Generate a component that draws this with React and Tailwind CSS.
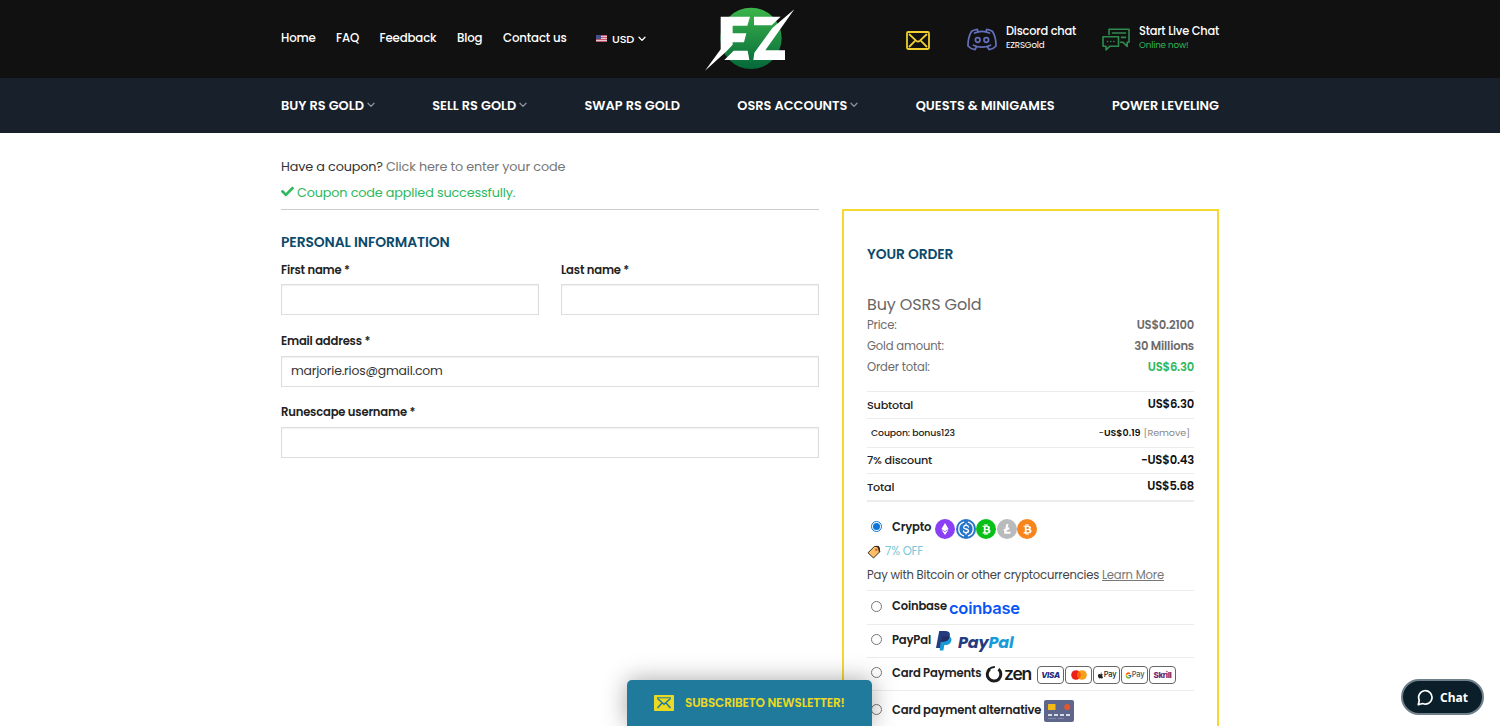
import { FaApple, FaBtc, FaCheck, FaEthereum } from "react-icons/fa";
import { FcGoogle } from "react-icons/fc";

function Caret({ className }) {
  return (
    <svg viewBox="0 0 8 6" className={className} fill="none" stroke="currentColor" strokeWidth="1.3" strokeLinecap="round" strokeLinejoin="round">
      <path d="M1 1.2 4 4.4 7 1.2" />
    </svg>
  );
}

function Logo() {
  return (
    <svg viewBox="0 0 360 234" className="h-[78px] w-[120px]">
      <defs>
        <linearGradient id="ball" x1="0" y1="0" x2="0" y2="1">
          <stop offset="0" stopColor="#3bb54a" />
          <stop offset="1" stopColor="#05683a" />
        </linearGradient>
      </defs>
      <circle cx="183" cy="115" r="92" fill="url(#ball)" />
      <g fill="#fff">
        <path d="M92 50H180L172 77H128V100H169L162 127H128V134L108 155L45 212L92 148Z" />
        <path d="M103 180 131 152H173L178 180Z" />
        <path d="M192 50H272L245 76H192Z" />
        <path d="M313 28 226 151H285V180H190L193 158L247 84Z" />
      </g>
    </svg>
  );
}

function Envelope({ className }) {
  return (
    <svg viewBox="0 0 24 19" className={className} fill="none" stroke="currentColor" strokeWidth="1.8" strokeLinejoin="round" strokeLinecap="round">
      <rect x="1" y="1" width="22" height="17" rx="1.2" />
      <path d="M3.500 3.500 10.300 9.800Q12 11.300 13.700 9.800L20.500 3.500M3.500 15.500 8.800 10.200M20.500 15.500 15.200 10.200" />
    </svg>
  );
}

function Discord() {
  return (
    <svg viewBox="0 0 30 23" className="h-[23px] w-[30px]" fill="none" stroke="#6470bd" strokeWidth="1.7" strokeLinecap="round" strokeLinejoin="round">
      <path d="M11 3.400 10.300 1.300Q7.500 1.500 4.600 3.300Q.8 9.500 1 18Q3.500 21 8 21.700L9.600 18.700M19 3.400 19.700 1.300Q22.500 1.500 25.400 3.300Q29.200 9.500 29 18Q26.500 21 22 21.700L20.400 18.700" />
      <path d="M7.500 5Q15 1.800 22.500 5M6.500 17.200Q15 21.200 23.500 17.200" />
      <circle cx="10.700" cy="12" r="2.300" />
      <circle cx="19.300" cy="12" r="2.300" />
    </svg>
  );
}

function LiveChat() {
  return (
    <svg viewBox="0 0 28 23" className="h-[23px] w-[28px]" fill="none" stroke="#2f8a50" strokeWidth="1.6" strokeLinejoin="round" strokeLinecap="round">
      <path d="M7 6.500V1.200H27V14.200H25.200V18.400L20.800 14.200H18.500" />
      <path d="M1 8.700H16.500V18.200H8L4 21.800V18.200H1Z" />
      <path d="M10.500 5H23.500M19.500 9.400H23.500" />
      <path d="M5.500 13.500H5.600M8.700 13.500H8.800M11.900 13.500H12" />
    </svg>
  );
}

function Flag() {
  return (
    <svg viewBox="0 0 11 7" className="-mt-px h-[7px] w-[11px]">
      <path fill="#e3c9cd" d="M0 0H11V7H0Z" />
      <path fill="#c2566b" d="M0 0H11V1H0ZM0 2H11V3H0ZM0 4H11V5H0ZM0 6H11V7H0Z" />
      <path fill="#454f8c" d="M0 0H5V4H0Z" />
    </svg>
  );
}

const menu = [
  { label: "BUY RS GOLD", caret: true },
  { label: "SELL RS GOLD", caret: true },
  { label: "SWAP RS GOLD" },
  { label: "OSRS ACCOUNTS", caret: true },
  { label: "QUESTS & MINIGAMES" },
  { label: "POWER LEVELING" },
];

function Header() {
  return (
    <header className="text-white">
      <div className="h-[78px] bg-[#111]">
        <div className="mx-auto flex h-full w-[938px] items-center">
          <nav className="flex w-[409px] shrink-0 items-center text-[11.8px] font-medium tracking-[-0.16px] whitespace-nowrap">
            <a className="w-[55px]">Home</a>
            <a className="w-[43.5px]">FAQ</a>
            <a className="w-[77.5px]">Feedback</a>
            <a className="w-[46px]">Blog</a>
            <a className="w-[93px]">Contact us</a>
            <Flag />
            <span className="ml-[5px] text-[11.3px]">USD</span>
            <Caret className="ml-1 h-[6px] w-[8px]" />
          </nav>
          <div className="-mr-[15px] shrink-0">
            <Logo />
          </div>
          <Envelope className="mt-[3px] ml-[111px] h-[19px] w-6 shrink-0 text-[#f0cf2e]" />
          <div className="ml-[36.5px] flex shrink-0 items-center">
            <Discord />
            <div className="-mt-[2px] ml-[9.500px] w-[86px] whitespace-nowrap">
              <div className="text-[11.4px] leading-[15px] font-medium tracking-[-0.21px]">Discord chat</div>
              <div className="text-[8.7px] leading-[13px] tracking-[-0.18px]">EZRSGold</div>
            </div>
          </div>
          <div className="ml-[10px] flex shrink-0 items-center">
            <LiveChat />
            <div className="-mt-[2px] ml-[9px] whitespace-nowrap">
              <div className="text-[11.4px] leading-[15px] font-medium tracking-[-0.21px]">Start Live Chat</div>
              <div className="text-[8.7px] leading-[13px] tracking-[-0.12px] text-[#2eb85c]">Online now!</div>
            </div>
          </div>
        </div>
      </div>
      <div className="h-[55px] bg-[#18202b]">
        <nav className="mx-auto flex h-full w-[938px] items-center justify-between text-[12.9px] font-semibold whitespace-nowrap">
          {menu.map((m) => (
            <a key={m.label} className="flex items-center">
              <span>{m.label}</span>
              {m.caret && <Caret className="ml-[3px] h-[6px] w-[8px] text-[#8d939b]" />}
            </a>
          ))}
        </nav>
      </div>
    </header>
  );
}

function Field({ label, value, lineClass }) {
  return (
    <label className="block">
      <span className={"block h-[30px] text-[11.6px] font-semibold tracking-[-0.2px] text-[#222] " + lineClass}>{label}</span>
      <input
        readOnly
        value={value || ""}
        className="block h-[31px] w-full border border-[#ddd] bg-white px-[9px] pb-[2px] text-[12.4px] tracking-[-0.18px] text-[#333] shadow-[inset_0_1px_2px_rgba(0,0,0,0.06)] outline-none"
      />
    </label>
  );
}

function Line({ label, value, valueClass }) {
  return (
    <div className="flex h-[21px] items-center justify-between text-[#6b6b6b]">
      <span>{label}</span>
      <span className={"font-semibold " + valueClass}>{value}</span>
    </div>
  );
}

function Radio({ checked }) {
  return (
    <span className={"ml-1 flex size-[11px] shrink-0 items-center justify-center rounded-full border " + (checked ? "border-[#0b76d8]" : "border-[#767676]")}>
      {checked && <span className="size-[7px] rounded-full bg-[#0b76d8]" />}
    </span>
  );
}

function Coin({ color, children }) {
  return <span className={"flex size-[20px] items-center justify-center rounded-full text-white " + color}>{children}</span>;
}

function CardBox({ children, className }) {
  return (
    <span className={"flex h-[18px] w-[27px] items-center justify-center rounded-[4px] border border-[#666] bg-white font-['Inter'] whitespace-nowrap " + className}>
      {children}
    </span>
  );
}

function Usdc() {
  return (
    <svg viewBox="0 0 20 20" className="size-[20px]" fill="none" stroke="#fff" strokeWidth="1.3" strokeLinecap="round">
      <path d="M7.600 3.200A7.200 7.200 0 0 0 7.600 16.800M12.400 3.200A7.200 7.200 0 0 1 12.400 16.800" />
      <path d="M12.500 8Q12.200 6.400 10 6.400T7.600 8.200Q7.600 9.600 10 10T12.500 11.900Q12.400 13.600 10 13.600T7.500 12M10 5V6.400M10 13.600V15" />
    </svg>
  );
}

function PayPalMark() {
  return (
    <svg viewBox="0 0 16 20" className="h-[20px] w-[16px]">
      <path fill="#179bd7" d="M5 5.500H13.500Q16.300 7 15.200 10.300 14.200 14 9.600 14H8.300L7.400 19.500H3.600Z" />
      <path fill="#253b80" d="M3.200 0H9.800Q15 .4 13.700 5.500 12.500 10.700 6.800 10.700H5L3.900 17H0Z" />
      <path fill="#222d65" d="M6 5.500H13.700Q12.500 10.700 6.800 10.700H5.100Z" />
    </svg>
  );
}

function ZenMark() {
  return (
    <svg viewBox="0 0 18 18" className="size-[18px] shrink-0" fill="none" stroke="#1c1c1c">
      <path d="M4.800 4A6.800 6.800 0 1 0 13.500 4.200" strokeWidth="3" />
      <path d="M4 4.300Q6.500 1.700 9.800 1.900" strokeWidth="2" />
    </svg>
  );
}

function AltCard() {
  return (
    <svg viewBox="0 0 30 22" className="ml-[2px] h-[22px] w-[30px] shrink-0">
      <rect width="30" height="22" rx="2" fill="#5f668b" />
      <rect x="4" y="4" width="7.500" height="6" rx=".6" fill="#f5b915" />
      <circle cx="23.200" cy="7" r="3" fill="#e9552b" />
      <path d="M4 15H8M10 15H14M16 15H20M22 15H26" stroke="#d8dbe8" strokeWidth="1.800" />
      <path d="M4 18.500H12M14 18.500H20" stroke="#8288a8" strokeWidth="1" />
    </svg>
  );
}

function Tag() {
  return (
    <svg viewBox="0 0 14 14" className="size-[14px]">
      <path d="M1 7.800 7.300 1.500 11.500 1.300 12.800 6.700 6.500 13 1 7.800Z" fill="#fbc065" stroke="#3a2a1e" strokeWidth="1" strokeLinejoin="round" />
      <path d="M8.500 1.200Q12.500.2 13 3.500V6.500L12 7.500 11 3Z" fill="#3a2a1e" />
      <circle cx="9.300" cy="4.800" r="1.300" fill="#e0603a" />
    </svg>
  );
}

function Order() {
  return (
    <aside className="mt-[76px] h-[600px] w-[377px] shrink-0 border-2 border-[#f5d832] px-[23px] pt-8 text-[11.6px] tracking-[-0.19px] whitespace-nowrap">
      <h3 className="h-[22px] text-[13.8px] leading-[23px] font-semibold tracking-[-0.08px] text-[#0b4a6b]">YOUR ORDER</h3>
      <div className="mt-[29px] h-[21px] text-[16px] leading-[22px] tracking-[-0.12px] text-[#666]">Buy OSRS Gold</div>
      <Line label="Price:" value="US$0.2100" />
      <Line label="Gold amount:" value="30 Millions" />
      <Line label="Order total:" value="US$6.30" valueClass="text-[#2eb85c]" />

      <div className="mt-[13px] border-t border-[#ececec] font-medium text-[#222]">
        <div className="flex h-[27px] items-center justify-between border-b border-[#ececec]">
          <span className="text-[11.2px]">Subtotal</span>
          <span className="font-semibold text-[#111]">US$6.30</span>
        </div>
        <div className="flex h-[29px] items-center justify-between border-b border-[#ececec] px-1 text-[9.3px] tracking-[-0.1px]">
          <span>Coupon: bonus123</span>
          <span className="flex items-center gap-[3px] text-[#111]">
            <span className="text-[9.5px] font-semibold tracking-normal"><span className="font-normal">-</span>US$0.19</span>
            <span className="text-[9.6px] font-normal text-[#888]">[Remove]</span>
          </span>
        </div>
        <div className="flex h-[26px] items-center justify-between border-b border-[#ececec]">
          <span className="text-[11.2px]">7% discount</span>
          <span className="font-semibold text-[#111]">−US$0.43</span>
        </div>
        <div className="flex h-[28px] items-center justify-between border-b-2 border-[#ececec]">
          <span className="text-[11.2px]">Total</span>
          <span className="font-semibold text-[#111]">US$5.68</span>
        </div>
      </div>

      <div className="mt-[14px] flex h-6 items-center font-semibold text-[#222]">
        <span className="mb-[4px]"><Radio checked /></span>
        <span className="mb-px ml-[10px] w-[43px]">Crypto</span>
        <span className="mt-[2px] flex gap-[0.6px]">
          <Coin color="bg-[#8b3ff5]"><FaEthereum className="size-[12px]" /></Coin>
          <Coin color="bg-[#2775ca]"><Usdc /></Coin>
          <Coin color="bg-[#0ac018]"><FaBtc className="size-[11px]" /></Coin>
          <Coin color="bg-[#b8babc]">
            <svg viewBox="0 0 12 12" className="size-[12px]" fill="none" stroke="#fff" strokeWidth="2">
              <path d="M6.500 1 4.300 9.800H9.500M2.800 7.500 8.300 5.200" />
            </svg>
          </Coin>
          <Coin color="bg-[#f7851b]"><FaBtc className="size-[11px]" /></Coin>
        </span>
      </div>
      <div className="flex h-6 items-center gap-1 text-[#7cc8d6]">
        <Tag />
        <span>7% OFF</span>
      </div>
      <div className="flex h-6 items-center gap-[3px] text-[#444]">
        <span>Pay with Bitcoin or other cryptocurrencies</span>
        <span className="text-[#777] underline">Learn More</span>
      </div>

      <div className="mt-[2px] font-semibold text-[#222]">
        <div className="flex h-[34px] items-center border-t border-[#ececec]">
          <span className="mb-[3px]"><Radio /></span>
          <span className="mb-px ml-[10px] w-[57px]">Coinbase</span>
          <span className="mt-[2px] font-['Inter'] text-[16.5px] leading-none font-semibold tracking-[-0.25px] text-[#0a55f5]">coinbase</span>
        </div>
        <div className="flex h-[33px] items-center border-t border-[#ececec]">
          <span className="mb-[3px]"><Radio /></span>
          <span className="mb-px ml-[10px] w-[44px]">PayPal</span>
          <PayPalMark />
          <span className="mt-[3px] ml-[6px] text-[16px] leading-none font-bold tracking-[-0.15px] text-[#253b80] italic">
            Pay<span className="text-[#179bd7]">Pal</span>
          </span>
        </div>
        <div className="flex h-[33px] items-center border-t border-[#ececec]">
          <span className="mb-[3px]"><Radio /></span>
          <span className="mb-px ml-[10px] w-[93px]">Card Payments</span>
          <ZenMark />
          <span className="ml-px w-[33px] font-['Inter'] text-[17.5px] leading-none font-semibold tracking-[-1.2px] text-[#1c1c1c]">zen</span>
          <span className="mt-[2px] flex gap-[1px]">
            <CardBox className="text-[8px] font-extrabold tracking-[-0.3px] text-[#1a2a80] italic">VISA</CardBox>
            <CardBox>
              <svg viewBox="0 0 16 10" className="h-[10px] w-[16px]">
                <circle cx="5" cy="5" r="4.800" fill="#eb201b" />
                <circle cx="11" cy="5" r="4.800" fill="#f79e1b" />
                <path d="M8 1.200A4.800 4.800 0 0 1 8 8.800 4.800 4.800 0 0 1 8 1.200Z" fill="#ff5f00" />
              </svg>
            </CardBox>
            <CardBox className="text-[7.5px] font-medium tracking-[-0.3px]"><FaApple className="size-[7px]" />Pay</CardBox>
            <CardBox className="text-[7.5px] font-medium tracking-[-0.3px] text-[#555]"><FcGoogle className="size-[7px]" />Pay</CardBox>
            <CardBox className="text-[8px] font-extrabold tracking-[-0.4px] text-[#7a1f6e]">Skrill</CardBox>
          </span>
        </div>
        <div className="flex h-[41px] items-center border-t border-[#ececec]">
          <span className="mb-[3px]"><Radio /></span>
          <span className="mb-px ml-[10px] w-[150px]">Card payment alternative</span>
          <AltCard />
        </div>
      </div>
    </aside>
  );
}

export default function App() {
  return (
    <div className="relative h-[726px] overflow-hidden bg-white font-['Poppins','Inter',sans-serif]">
      <Header />
      <main className="mx-auto flex w-[938px] justify-between">
        <section className="w-[538px]">
          <div className="mt-5 flex h-[26px] items-center gap-[3px] pt-px text-[12.8px] tracking-[-0.15px]">
            <span className="text-[#333]">Have a coupon?</span>
            <a className="text-[#777]">Click here to enter your code</a>
          </div>
          <div className="flex h-[31px] items-start border-b border-[#ccc] pt-[4px] text-[12.8px] tracking-[-0.15px] text-[#2eb85c]">
            <FaCheck className="mt-[2px] size-[13px]" />
            <span className="ml-[3px]">Coupon code applied successfully.</span>
          </div>
          <h3 className="mt-[22px] h-[21px] text-[13.9px] leading-[21px] font-semibold tracking-[-0.1px] text-[#0b4a6b]">PERSONAL INFORMATION</h3>
          <div className="mt-px grid grid-cols-2 gap-[22px]">
            <Field label="First name *" lineClass="leading-[33px]" />
            <Field label="Last name *" lineClass="leading-[33px]" />
          </div>
          <div className="mt-[11px] flex flex-col gap-[10px]">
            <Field label="Email address *" lineClass="leading-[31px]" value="marjorie.rios@gmail.com" />
            <Field label="Runescape username *" lineClass="leading-[31px]" />
          </div>
        </section>
        <Order />
      </main>

      <button className="absolute bottom-0 left-[627px] flex h-[46px] w-[245px] items-center rounded-t-[5px] bg-[#1f7a9c] pl-[27px] text-[#ecd922] shadow-[0_0_24px_rgba(0,0,0,0.35)]">
        <svg viewBox="0 0 20 16" className="h-[16px] w-[20px]">
          <rect width="20" height="16" rx="1" fill="#ecd922" />
          <path d="M3.500 3.500 10 9.300 16.500 3.500M3.500 13 8 8M16.500 13 12 8" fill="none" stroke="#1f7a9c" strokeWidth="1.500" />
          <path d="M3 2.800H17" stroke="#1f7a9c" strokeWidth="1" />
        </svg>
        <span className="ml-[11px] text-[12px] font-semibold tracking-[-0.15px] whitespace-nowrap">SUBSCRIBETO NEWSLETTER!</span>
      </button>

      <button className="absolute top-[679px] left-[1401px] flex h-[36px] w-[83px] items-center rounded-full border-2 border-[#6f7f8a] bg-[#0b1f2b] pl-[14px] text-white">
        <svg viewBox="0 0 17 17" className="size-[17px]" fill="none" stroke="#fff" strokeWidth="1.700" strokeLinejoin="round">
          <path d="M2.300 11.300A6.700 6.700 0 1 1 5.600 14.500L1.300 15.700Z" />
        </svg>
        <span className="mt-px ml-[6px] font-['Noto_Sans',sans-serif] text-[12px] font-bold">Chat</span>
      </button>
    </div>
  );
}
